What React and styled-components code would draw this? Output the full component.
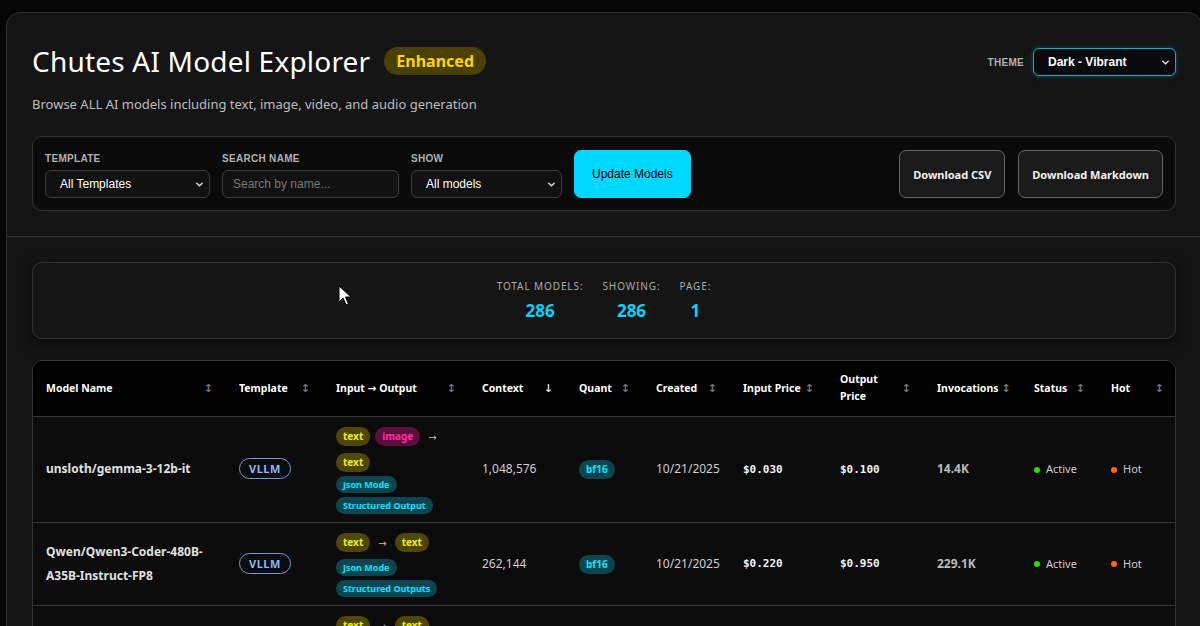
import React from 'react';
import styled, { createGlobalStyle } from 'styled-components';

const GlobalStyle = createGlobalStyle`
  html, body {
    margin: 0;
    padding: 0;
    background: #050505;
    overflow: hidden;
  }
  body {
    font-family: "Noto Sans", "DejaVu Sans", sans-serif;
    color: #fff;
  }
  * { box-sizing: border-box; }
`;

const Page = styled.div`
  padding: 12px 0 0 6px;
  width: 1202px;
  height: 626px;
  overflow: hidden;
  position: relative;
`;

const Shell = styled.div`
  width: 1196px;
  background: #141414;
  border: 1px solid #2e2e2e;
  border-radius: 14px;
  min-height: 700px;
`;

const Header = styled.header`
  padding: 32px 25px 25px 25px;
  border-bottom: 1px solid #333;
`;

const TopRow = styled.div`
  display: flex;
  justify-content: space-between;
  align-items: flex-start;
`;

const TitleRow = styled.div`
  display: flex;
  align-items: center;
  gap: 14px;
`;

const Title = styled.h1`
  margin: 0;
  font-size: 28px;
  font-weight: 400;
  color: #fff;
  letter-spacing: 0.2px;
  line-height: 32px;
`;

const Badge = styled.span`
  background: #4a4000;
  color: #ffd400;
  font-weight: 700;
  font-size: 16px;
  padding: 3px 12px;
  border-radius: 14px;
  line-height: 22px;
`;

const Subtitle = styled.p`
  margin: 18px 0 0;
  font-size: 13px;
  color: #bdbdbd;
`;

const ThemeBox = styled.div`
  display: flex;
  align-items: center;
  gap: 9px;
  margin-top: 3px;
`;

const SmallLabel = styled.label`
  font-size: 10px;
  font-weight: 700;
  text-transform: uppercase;
  color: #b0b0b0;
  letter-spacing: 0.3px;
  font-family: "Liberation Sans", Arial, sans-serif;
`;

const SelectWrap = styled.div`
  position: relative;
  width: ${p => p.$w}px;
`;

const Select = styled.select`
  appearance: none;
  width: 100%;
  height: 28px;
  background: ${p => (p.$accent ? '#0a0a0a' : '#111')};
  border: 1px solid ${p => (p.$accent ? '#18a9c9' : '#3d3d3d')};
  box-shadow: ${p => (p.$accent ? '0 0 4px rgba(0, 200, 255, 0.35)' : 'none')};
  border-radius: 6px;
  color: #fff;
  font-family: "Liberation Sans", Arial, sans-serif;
  font-size: 12px;
  font-weight: ${p => (p.$accent ? 700 : 400)};
  padding: 0 14px;
  outline: none;
`;

const Chevron = styled.svg`
  position: absolute;
  right: 6px;
  top: 10px;
  pointer-events: none;
`;

const FilterCard = styled.div`
  margin-top: 23px;
  background: #0a0a0a;
  border: 1px solid #333;
  border-radius: 10px;
  padding: 13px 12px 12px 12px;
  display: flex;
  align-items: flex-end;
  justify-content: space-between;
`;

const FilterGroup = styled.div`
  display: flex;
  align-items: flex-end;
  gap: 12px;
`;

const Field = styled.div`
  display: flex;
  flex-direction: column;
  gap: 6px;
`;

const Input = styled.input`
  width: 177px;
  height: 28px;
  background: #111;
  border: 1px solid #3d3d3d;
  border-radius: 6px;
  color: #fff;
  font-family: "Liberation Sans", Arial, sans-serif;
  font-size: 12px;
  padding: 0 10px;
  outline: none;
  &::placeholder { color: #777; }
`;

const Button = styled.button`
  height: 48px;
  padding: 0 ${p => (p.$primary ? 17 : 13)}px;
  border-radius: 7px;
  border: 1px solid ${p => (p.$primary ? '#00d4ff' : '#666')};
  background: ${p => (p.$primary ? '#00d8ff' : '#1a1a1a')};
  color: ${p => (p.$primary ? '#000' : '#f2f2f2')};
  font-family: ${p => (p.$primary ? '"Liberation Sans", Arial, sans-serif' : '"Noto Sans", sans-serif')};
  font-size: ${p => (p.$primary ? 12 : 11)}px;
  font-weight: ${p => (p.$primary ? 400 : 700)};
`;

const ButtonGroup = styled.div`
  display: flex;
  gap: 13px;
`;

const Content = styled.section`
  padding: 25px 25px;
`;

const StatsCard = styled.div`
  height: 77px;
  background: #141414;
  border: 1px solid #333;
  border-radius: 10px;
  box-shadow: 0 4px 14px rgba(0, 0, 0, 0.6);
  display: flex;
  justify-content: center;
  align-items: center;
  gap: 19px;
`;

const Stat = styled.div`
  display: flex;
  flex-direction: column;
  align-items: center;
  gap: 6px;
`;

const StatLabel = styled.div`
  font-size: 10px;
  color: #aaa;
  text-transform: uppercase;
  letter-spacing: 0.9px;
`;

const StatValue = styled.div`
  font-size: 17px;
  font-weight: 700;
  color: #00d4ff;
`;

const TableWrap = styled.div`
  margin-top: 21px;
  border: 1px solid #333;
  border-radius: 10px;
  overflow: hidden;
  background: #0b0b0b;
`;

const Table = styled.table`
  width: 100%;
  border-collapse: collapse;
  table-layout: fixed;
`;

const Th = styled.th`
  background: #000;
  height: 55px;
  padding: 0 13px;
  text-align: left;
  font-size: 10.5px;
  font-weight: 700;
  color: #fff;
  border-bottom: 1px solid #333;
`;

const ThInner = styled.div`
  display: flex;
  align-items: center;
  justify-content: space-between;
  gap: 3px;
  line-height: 17px;
`;

const ThLabel = styled.span`
  white-space: nowrap;
`;

const SortIcon = styled.span`
  color: ${p => (p.$active ? '#ddd' : '#777')};
  font-size: 11px;
  font-family: "DejaVu Sans", sans-serif;
`;

const Td = styled.td`
  padding: 8px 13px;
  font-size: 12px;
  color: #cfcfcf;
  vertical-align: middle;
  border-bottom: 1px solid #333;
  line-height: 24px;
`;

const ModelName = styled.span`
  font-weight: 700;
  color: #e0e0e0;
  font-size: 12px;
`;

const TemplatePill = styled.span`
  display: inline-block;
  border: 1px solid #6a9ee0;
  color: #8ab8ff;
  border-radius: 12px;
  font-size: 11px;
  font-weight: 700;
  padding: 0 9px;
  line-height: 19px;
  letter-spacing: 0.5px;
`;

const TagList = styled.div`
  display: flex;
  flex-wrap: wrap;
  align-items: center;
  gap: 4px 5px;
`;

const tagColors = {
  text: ['#4f4700', '#f0f000'],
  image: ['#5a0f3c', '#ff2ba8'],
  feature: ['#0b4550', '#00e5ff'],
};

const Tag = styled.span`
  background: ${p => tagColors[p.$kind][0]};
  color: ${p => tagColors[p.$kind][1]};
  font-size: ${p => (p.$kind === 'feature' ? 9 : 10)}px;
  font-weight: 700;
  border-radius: 10px;
  padding: 0 7px;
  line-height: ${p => (p.$kind === 'feature' ? 17 : 19)}px;
  white-space: nowrap;
`;

const Arrow = styled.span`
  color: #bbb;
  font-size: 10px;
  padding: 0 3px;
`;

const Features = styled.div`
  display: flex;
  flex-direction: column;
  align-items: flex-start;
  gap: 4px;
  margin-top: 4px;
`;

const QuantPill = styled.span`
  display: inline-block;
  background: #0b4550;
  color: #00e5ff;
  font-size: 10px;
  font-weight: 700;
  border-radius: 10px;
  padding: 0 7px;
  line-height: 19px;
`;

const Price = styled.span`
  font-family: "DejaVu Sans Mono", "Liberation Mono", monospace;
  font-weight: 700;
  font-size: 11px;
  color: #f2f2f2;
`;

const Invocations = styled.span`
  font-weight: 700;
  color: #bbb;
  font-size: 12px;
`;

const Dot = styled.span`
  display: inline-block;
  width: 6px;
  height: 6px;
  border-radius: 50%;
  background: ${p => p.$color};
  margin-right: 6px;
  vertical-align: middle;
`;

const StatusText = styled.span`
  font-size: 11px;
  color: #ccc;
`;

const Cursor = styled.svg`
  position: absolute;
  left: 338px;
  top: 285px;
`;

const columns = [
  ['Model Name', 193],
  ['Template', 97],
  ['Input → Output', 146],
  ['Context', 97, true],
  ['Quant', 77],
  ['Created', 87],
  ['Input Price', 97],
  ['Output Price', 97],
  ['Invocations', 97],
  ['Status', 77],
  ['Hot', 79],
];

const rows = [
  {
    name: 'unsloth/gemma-3-12b-it',
    inputs: ['text', 'image'],
    outputs: ['text'],
    features: ['Json Mode', 'Structured Output'],
    context: '1,048,576',
    input: '$0.030',
    output: '$0.100',
    inv: '14.4K',
  },
  {
    name: 'Qwen/Qwen3-Coder-480B-A35B-Instruct-FP8',
    inputs: ['text'],
    outputs: ['text'],
    features: ['Json Mode', 'Structured Outputs'],
    context: '262,144',
    input: '$0.220',
    output: '$0.950',
    inv: '229.1K',
  },
  {
    name: 'deepseek-ai/DeepSeek-V3.1',
    inputs: ['text'],
    outputs: ['text'],
    features: ['Json Mode', 'Structured Outputs'],
    context: '163,840',
    input: '$0.200',
    output: '$0.800',
    inv: '98.2K',
  },
];

const ChevronDown = () => (
  <Chevron width="9" height="9" viewBox="0 0 10 10">
    <path d="M2 3.5 L5 6.5 L8 3.5" fill="none" stroke="#ddd" strokeWidth="1.6" strokeLinecap="round" />
  </Chevron>
);

function App() {
  return (
    <Page>
      <GlobalStyle />
      <Shell>
        <Header>
          <TopRow>
            <div>
              <TitleRow>
                <Title>Chutes AI Model Explorer</Title>
                <Badge>Enhanced</Badge>
              </TitleRow>
              <Subtitle>Browse ALL AI models including text, image, video, and audio generation</Subtitle>
            </div>
            <ThemeBox>
              <SmallLabel>Theme</SmallLabel>
              <SelectWrap $w={143}>
                <Select $accent defaultValue="dv">
                  <option value="dv">Dark - Vibrant</option>
                </Select>
                <ChevronDown />
              </SelectWrap>
            </ThemeBox>
          </TopRow>

          <FilterCard>
            <FilterGroup>
              <Field>
                <SmallLabel>Template</SmallLabel>
                <SelectWrap $w={165}>
                  <Select defaultValue="all">
                    <option value="all">All Templates</option>
                  </Select>
                  <ChevronDown />
                </SelectWrap>
              </Field>
              <Field>
                <SmallLabel>Search Name</SmallLabel>
                <Input placeholder="Search by name..." />
              </Field>
              <Field>
                <SmallLabel>Show</SmallLabel>
                <SelectWrap $w={151}>
                  <Select defaultValue="all">
                    <option value="all">All models</option>
                  </Select>
                  <ChevronDown />
                </SelectWrap>
              </Field>
              <Button $primary>Update Models</Button>
            </FilterGroup>
            <ButtonGroup>
              <Button>Download CSV</Button>
              <Button>Download Markdown</Button>
            </ButtonGroup>
          </FilterCard>
        </Header>

        <Content>
          <StatsCard>
            <Stat>
              <StatLabel>Total Models:</StatLabel>
              <StatValue>286</StatValue>
            </Stat>
            <Stat>
              <StatLabel>Showing:</StatLabel>
              <StatValue>286</StatValue>
            </Stat>
            <Stat>
              <StatLabel>Page:</StatLabel>
              <StatValue>1</StatValue>
            </Stat>
          </StatsCard>

          <TableWrap>
            <Table>
              <colgroup>
                {columns.map(([label, w]) => (
                  <col key={label} style={{ width: w }} />
                ))}
              </colgroup>
              <thead>
                <tr>
                  {columns.map(([label, , active]) => (
                    <Th key={label}>
                      <ThInner>
                        <ThLabel>{label === 'Output Price' ? <>Output<br />Price</> : label}</ThLabel>
                        <SortIcon $active={active}>{active ? '↓' : '↕'}</SortIcon>
                      </ThInner>
                    </Th>
                  ))}
                </tr>
              </thead>
              <tbody>
                {rows.map(r => (
                  <tr key={r.name}>
                    <Td><ModelName>{r.name}</ModelName></Td>
                    <Td><TemplatePill>VLLM</TemplatePill></Td>
                    <Td>
                      <TagList>
                        {r.inputs.map(t => <Tag key={'i' + t} $kind={t}>{t}</Tag>)}
                        <Arrow>→</Arrow>
                        {r.outputs.map(t => <Tag key={'o' + t} $kind={t}>{t}</Tag>)}
                      </TagList>
                      <Features>
                        {r.features.map(f => <Tag key={f} $kind="feature">{f}</Tag>)}
                      </Features>
                    </Td>
                    <Td>{r.context}</Td>
                    <Td><QuantPill>bf16</QuantPill></Td>
                    <Td>10/21/2025</Td>
                    <Td><Price>{r.input}</Price></Td>
                    <Td><Price>{r.output}</Price></Td>
                    <Td><Invocations>{r.inv}</Invocations></Td>
                    <Td><Dot $color="#22e000" /><StatusText>Active</StatusText></Td>
                    <Td><Dot $color="#ff6a00" /><StatusText>Hot</StatusText></Td>
                  </tr>
                ))}
              </tbody>
            </Table>
          </TableWrap>
        </Content>
      </Shell>
      <Cursor width="14" height="22" viewBox="0 0 14 22">
        <path d="M1 1 L1 17 L5 13 L8 20 L10.5 19 L7.5 12 L13 12 Z" fill="#fff" stroke="#000" strokeWidth="1" />
      </Cursor>
    </Page>
  );
}

export default App;
